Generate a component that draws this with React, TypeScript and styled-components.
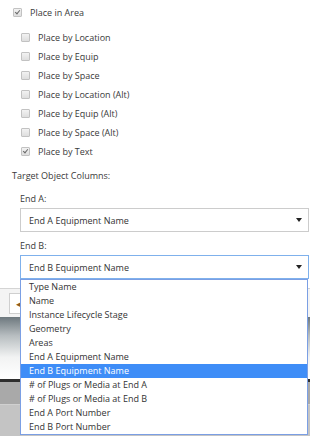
import styled, { createGlobalStyle } from "styled-components"

const Global = createGlobalStyle`
  html, body {
    margin: 0;
    padding: 0;
    background: #fff;
  }
  body {
    font-family: "Open Sans", "Liberation Sans", sans-serif;
    font-size: 9px;
    color: #3a3a3a;
  }
`

const Page = styled.div`
  width: 310px;
  height: 436px;
  overflow: hidden;
  display: flex;
  flex-direction: column;
`

const Form = styled.div`
  padding: 3px 1px 0 12px;
  display: flex;
  flex-direction: column;
`

const CheckRow = styled.label<{ $sub?: boolean }>`
  height: 19px;
  display: flex;
  align-items: center;
  gap: 8px;
  padding-left: ${p => (p.$sub ? "9px" : "1px")};
`

const SubList = styled.div`
  margin-top: 6px;
  display: flex;
  flex-direction: column;
`

const Box = styled.span<{ $checked?: boolean }>`
  width: 7px;
  height: 7px;
  border: 1px solid #c2c2c2;
  border-radius: 1px;
  background: linear-gradient(#f2f2f2, #dedede);
  position: relative;
  flex-shrink: 0;

  &::after {
    content: "";
    display: ${p => (p.$checked ? "block" : "none")};
    position: absolute;
    left: 2px;
    top: 0px;
    width: 2px;
    height: 4px;
    border: solid #6a6a6a;
    border-width: 0 1.5px 1.5px 0;
    transform: rotate(40deg);
  }
`

const Heading = styled.div`
  margin-top: 8px;
  height: 14px;
  line-height: 14px;
`

const Field = styled.div`
  padding-left: 8px;
  display: flex;
  flex-direction: column;
`

const FieldLabel = styled.div<{ $gap: number }>`
  margin-top: ${p => p.$gap}px;
  height: 14px;
  line-height: 14px;
  margin-bottom: 2px;
`

const SelectWrap = styled.div`
  position: relative;
`

const SelectBox = styled.div<{ $open?: boolean }>`
  height: 22px;
  border: 1px solid ${p => (p.$open ? "#7fb1ec" : "#cccccc")};
  display: flex;
  align-items: center;
  justify-content: space-between;
  padding: 0 6px 0 8px;
  color: #333;
`

const Caret = styled.span`
  width: 0;
  height: 0;
  border-left: 3px solid transparent;
  border-right: 3px solid transparent;
  border-top: 4px solid #222;
`

const Menu = styled.ul`
  position: absolute;
  top: 100%;
  left: 0;
  right: 1px;
  margin: 0;
  padding: 0;
  list-style: none;
  background: #fff;
  border: 1px solid #7b9fe4;
  z-index: 5;
`

const Option = styled.li<{ $active?: boolean }>`
  height: 14px;
  line-height: 14px;
  padding-left: 8px;
  background: ${p => (p.$active ? "#3e8df7" : "transparent")};
  color: ${p => (p.$active ? "#fff" : "#333")};
`

const Footer = styled.div`
  margin-top: 9px;
  height: 28px;
  border-top: 1px solid #d4d4d4;
  background: #f4f4f4;
  display: flex;
  align-items: center;
  padding-left: 9px;
`

const BackButton = styled.button`
  height: 21px;
  width: 40px;
  padding: 0 0 0 6px;
  border: 1px solid #cfcfcf;
  background: #fff;
  font: inherit;
  color: #8a5a20;
  display: flex;
  align-items: center;
`

const Viewport = styled.div`
  height: 62px;
  background: linear-gradient(#6d787e 0%, #b7bdc0 30%, #f2f3f3 65%, #ffffff 100%);
`

const Divider = styled.div`
  height: 3px;
  background: #2e2e2e;
`

const Shelf = styled.div`
  height: 22px;
  background: #a9a9a9;
`

const Floor = styled.div`
  flex: 1;
  background: #c4c4c4;
  border-top: 1px solid #d0d0d0;
`

const subOptions = [
  { label: "Place by Location", checked: false },
  { label: "Place by Equip", checked: false },
  { label: "Place by Space", checked: false },
  { label: "Place by Location (Alt)", checked: false },
  { label: "Place by Equip (Alt)", checked: false },
  { label: "Place by Space (Alt)", checked: false },
  { label: "Place by Text", checked: true },
]

const columns = [
  "Type Name",
  "Name",
  "Instance Lifecycle Stage",
  "Geometry",
  "Areas",
  "End A Equipment Name",
  "End B Equipment Name",
  "# of Plugs or Media at End A",
  "# of Plugs or Media at End B",
  "End A Port Number",
  "End B Port Number",
]

export default function App() {
  const selected = "End B Equipment Name"

  return (
    <Page>
      <Global />
      <Form>
        <CheckRow>
          <Box $checked />
          Place in Area
        </CheckRow>
        <SubList>
          {subOptions.map(o => (
            <CheckRow $sub key={o.label}>
              <Box $checked={o.checked} />
              {o.label}
            </CheckRow>
          ))}
        </SubList>
        <Heading>Target Object Columns:</Heading>
        <Field>
          <FieldLabel $gap={9}>End A:</FieldLabel>
          <SelectWrap>
            <SelectBox>
              End A Equipment Name
              <Caret />
            </SelectBox>
          </SelectWrap>
          <FieldLabel $gap={7}>End B:</FieldLabel>
          <SelectWrap>
            <SelectBox $open>
              {selected}
              <Caret />
            </SelectBox>
            <Menu>
              {columns.map(c => (
                <Option key={c} $active={c === selected}>
                  {c}
                </Option>
              ))}
            </Menu>
          </SelectWrap>
        </Field>
      </Form>
      <Footer>
        <BackButton aria-label="Back">◂</BackButton>
      </Footer>
      <Viewport />
      <Divider />
      <Shelf />
      <Floor />
    </Page>
  )
}
